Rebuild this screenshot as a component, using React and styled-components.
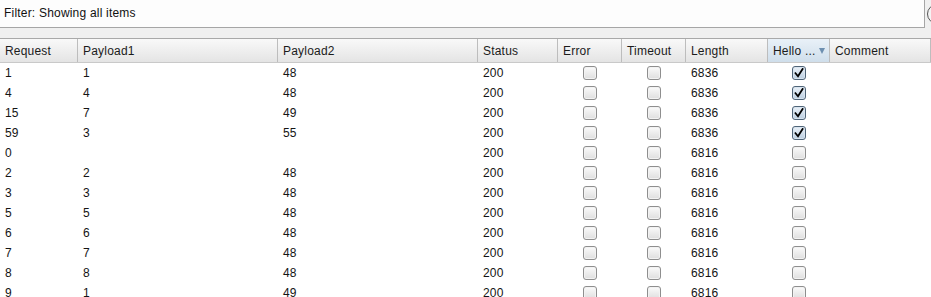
import React from "react";
import styled, { createGlobalStyle, css } from "styled-components";

const Global = createGlobalStyle`
  html, body { margin: 0; padding: 0; background: #f0f0f0; overflow: hidden; }
  body { font-family: "Liberation Sans", Arial, sans-serif; font-size: 12px; color: #111; }
`;

const COLS = "78px 200px 200px 80px 64px 64px 82px 62px 1fr";

const Page = styled.div`
  width: 931px;
  height: 297px;
  overflow: hidden;
  display: flex;
  flex-direction: column;
  & > * { flex-shrink: 0; }
`;

const FilterRow = styled.div`
  display: flex;
  height: 28px;
  gap: 2px;
`;

const FilterBox = styled.div`
  width: 925px;
  flex: none;
  box-sizing: border-box;
  height: 28px;
  background: #fdfdfd;
  border-right: 1px solid #a6a6a6;
  border-bottom: 1px solid #a6a6a6;
  display: flex;
  align-items: center;
  padding: 0 0 2px 4px;
  font-size: 12px;
  letter-spacing: 0.2px;
`;

const RoundButton = styled.div`
  flex: none;
  width: 20px;
  height: 20px;
  margin-top: 4px;
  box-sizing: border-box;
  border: 1px solid #555;
  border-radius: 50%;
  background: #f4f4f4;
`;

const Spacer = styled.div`
  height: 10px;
`;

const Header = styled.div`
  display: grid;
  grid-template-columns: ${COLS};
  height: 25px;
  box-sizing: border-box;
  border-top: 1px solid #a9a9a9;
  border-bottom: 1px solid #c9c9c9;
  background: linear-gradient(#f9f9f9, #e4e4e4);
`;

const HeadCell = styled.div`
  display: flex;
  align-items: center;
  padding-left: 5px;
  border-right: 1px solid #bdbdbd;
  box-sizing: border-box;
  color: #1b1b1b;
  letter-spacing: 0.2px;
  ${(p) =>
    p.$sorted &&
    css`
      background: linear-gradient(#e9f1f8, #cfdeeb);
      justify-content: space-between;
      padding-right: 4px;
    `}
`;

const SortArrow = styled.span`
  width: 0;
  height: 0;
  border-left: 3.5px solid transparent;
  border-right: 3.5px solid transparent;
  border-top: 6px solid #6d8fb0;
`;

const Body = styled.div`
  background: #fff;
  flex: 1;
`;

const Row = styled.div`
  display: grid;
  grid-template-columns: ${COLS};
  height: 20px;
`;

const Cell = styled.div`
  display: flex;
  align-items: center;
  padding-left: 5px;
  letter-spacing: 0.2px;
  justify-content: ${(p) => (p.$center ? "center" : "flex-start")};
  ${(p) => p.$center && css`padding-left: 0;`}
  color: #141414;
`;

const Box = styled.span`
  width: 14px;
  height: 14px;
  box-sizing: border-box;
  border-radius: 3px;
  border: 1px solid ${(p) => (p.$on ? "#4f6478" : "#8e8e8e")};
  background: ${(p) =>
    p.$on
      ? "linear-gradient(#eaf1f8, #bccfe1)"
      : "linear-gradient(#fbfbfb, #dedede)"};
  box-shadow: inset 0 0 0 1px ${(p) => (p.$on ? "#d8e4ef" : "#f2f2f2")};
  display: flex;
  align-items: center;
  justify-content: center;
`;

const Check = ({ on }) => (
  <Box $on={on}>
    {on && (
      <svg width="10" height="10" viewBox="0 0 10 10">
        <path d="M1.5 5.2 L4 8.3 L8.6 1" fill="none" stroke="#000" strokeWidth="1.8" strokeLinecap="square" />
      </svg>
    )}
  </Box>
);

const rows = [
  ["1", "1", "48", "200", "6836", true],
  ["4", "4", "48", "200", "6836", true],
  ["15", "7", "49", "200", "6836", true],
  ["59", "3", "55", "200", "6836", true],
  ["0", "", "", "200", "6816", false],
  ["2", "2", "48", "200", "6816", false],
  ["3", "3", "48", "200", "6816", false],
  ["5", "5", "48", "200", "6816", false],
  ["6", "6", "48", "200", "6816", false],
  ["7", "7", "48", "200", "6816", false],
  ["8", "8", "48", "200", "6816", false],
  ["9", "1", "49", "200", "6816", false],
];

const headers = ["Request", "Payload1", "Payload2", "Status", "Error", "Timeout", "Length"];

export default function App() {
  return (
    <Page>
      <Global />
      <FilterRow>
        <FilterBox>Filter: Showing all items</FilterBox>
        <RoundButton />
      </FilterRow>
      <Spacer />
      <Header>
        {headers.map((h) => (
          <HeadCell key={h}>{h}</HeadCell>
        ))}
        <HeadCell $sorted>
          Hello ...
          <SortArrow />
        </HeadCell>
        <HeadCell>Comment</HeadCell>
      </Header>
      <Body>
        {rows.map((r, i) => (
          <Row key={i}>
            <Cell>{r[0]}</Cell>
            <Cell>{r[1]}</Cell>
            <Cell>{r[2]}</Cell>
            <Cell>{r[3]}</Cell>
            <Cell $center>
              <Check on={false} />
            </Cell>
            <Cell $center>
              <Check on={false} />
            </Cell>
            <Cell>{r[4]}</Cell>
            <Cell $center>
              <Check on={r[5]} />
            </Cell>
            <Cell />
          </Row>
        ))}
      </Body>
    </Page>
  );
}
